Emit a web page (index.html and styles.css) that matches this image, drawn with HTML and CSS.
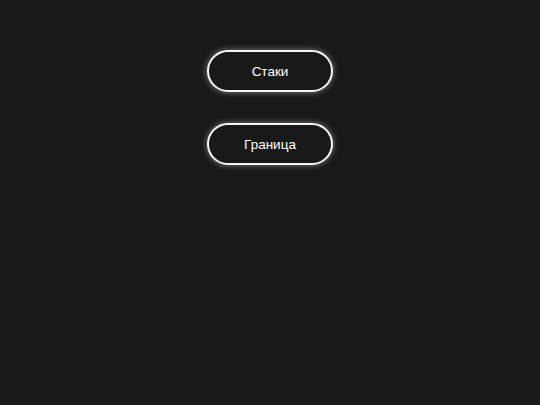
FILE: index.html
```html
<!DOCTYPE html>
<html lang="ru">
<head>
    <meta charset="UTF-8">
    <meta name="viewport" content="width=device-width, initial-scale=1.0">
    <title>Меню</title>
    <link rel="stylesheet" href="styles.css">
</head>
<body>
    <div class="menu">
        <button class="menu-btn">Стаки</button>
        <button class="menu-btn">Граница</button>
    </div>
</body>
</html>
```

FILE: styles.css
```css
body {
    margin: 0;
    background: #191919;
    font-family: "Liberation Sans", Arial, sans-serif;
    min-height: 100vh;
}

.menu {
    display: flex;
    flex-direction: column;
    align-items: center;
    gap: 31px;
    padding-top: 50px;
}

.menu-btn {
    box-sizing: border-box;
    width: 126px;
    height: 42px;
    padding: 0;
    border: 2px solid #f4f4f4;
    border-radius: 21px;
    background: #191919;
    color: #ffffff;
    font-family: inherit;
    font-size: 13.5px;
    box-shadow: 0 0 6px rgba(255, 255, 255, 0.45);
    cursor: pointer;
}
```
